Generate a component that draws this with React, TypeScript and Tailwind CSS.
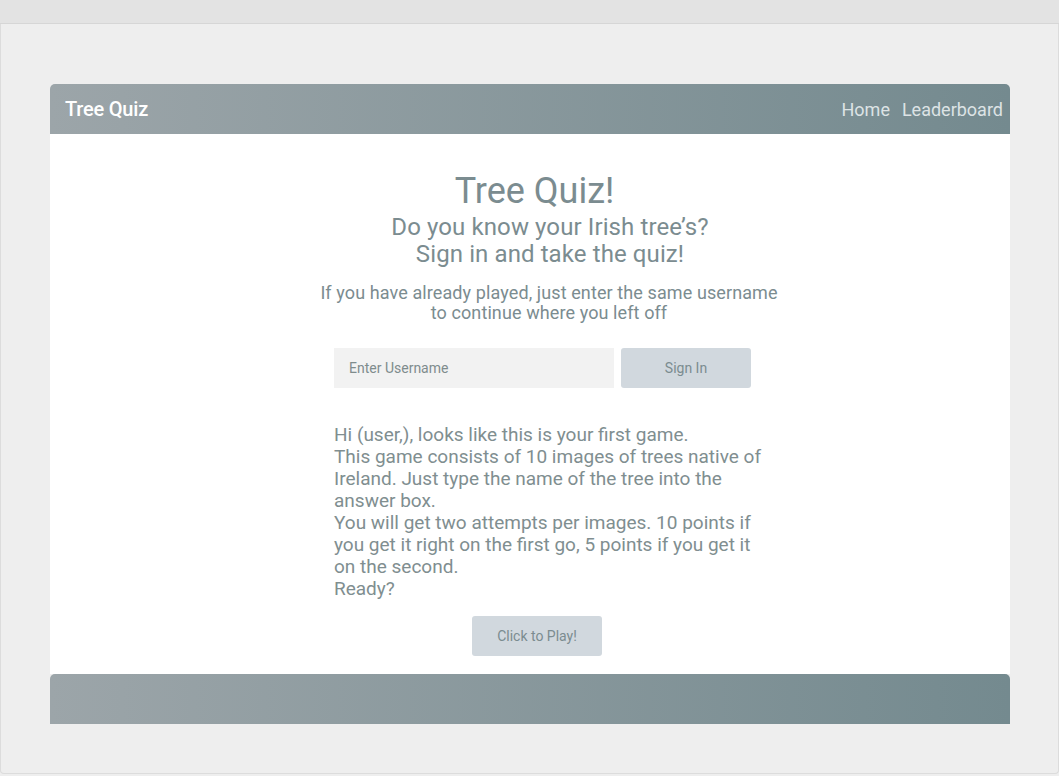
export default function App() {
  return (
    <div
      className="min-h-[776px] bg-[#eeeeee] text-[#7b8c90]"
      style={{ fontFamily: 'Roboto, "Liberation Sans", sans-serif' }}
    >
      <div className="h-[24px] bg-[#e3e3e3] border-b border-[#d6d6d6]" />

      <div className="h-[750px] border-l border-r border-b border-[#dcdcdc] rounded-b-[4px] pt-[60px]">
        <div className="ml-[49px] mr-[48px] flex flex-col">
          <nav className="h-[50px] rounded-t-[5px] bg-gradient-to-r from-[#9ca5a9] to-[#748a8f] flex items-center justify-between pl-[15px] pr-[7px]">
            <span className="text-white text-[20px] font-medium tracking-[-0.2px]">Tree Quiz</span>
            <div className="flex items-center gap-[12px] text-[#dde3e5] text-[18px]">
              <a href="#">Home</a>
              <a href="#">Leaderboard</a>
            </div>
          </nav>

          <main className="bg-white h-[540px] flex flex-col items-center pt-[34px]">
            <h1 className="text-[36px] leading-[46px] ml-[9px]">Tree Quiz!</h1>
            <h2 className="text-[24px] leading-[27px] text-center ml-[40px] tracking-[0.1px]">
              Do you know your Irish tree’s?
              <br />
              Sign in and take the quiz!
            </h2>
            <p className="mt-[15px] text-[18px] leading-[20px] text-center ml-[38px] tracking-[0.1px]">
              If you have already played, just enter the same username
              <br />
              to continue where you left off
            </p>

            <form className="mt-[25px] ml-[25px] flex gap-[7px]" onSubmit={(e) => e.preventDefault()}>
              <input
                type="text"
                placeholder="Enter Username"
                className="w-[280px] h-[40px] bg-[#f2f2f2] px-[15px] text-[14px] text-[#7b8c90] placeholder:text-[#7f8c8d] outline-none"
              />
              <button className="w-[130px] h-[40px] rounded-[3px] bg-[#d1d8de] text-[14px] text-[#7b8c90]">
                Sign In
              </button>
            </form>

            <div className="mt-[36px] ml-[48px] w-[440px] text-[19px] leading-[22px] text-[#808e90]">
              <p>Hi (user,), looks like this is your first game.</p>
              <p>
                This game consists of 10 images of trees native of Ireland. Just type the name of the tree into the
                answer box.
              </p>
              <p>
                You will get two attempts per images. 10 points if you get it right on the first go, 5 points if you
                get it on the second.
              </p>
              <p>Ready?</p>
            </div>

            <button className="mt-[16px] ml-[14px] w-[130px] h-[40px] rounded-[3px] bg-[#d1d8de] text-[14px] text-[#7b8c90]">
              Click to Play!
            </button>
          </main>

          <footer className="h-[50px] rounded-t-[5px] bg-gradient-to-r from-[#9ca5a9] to-[#748a8f]" />
        </div>
      </div>
    </div>
  )
}
